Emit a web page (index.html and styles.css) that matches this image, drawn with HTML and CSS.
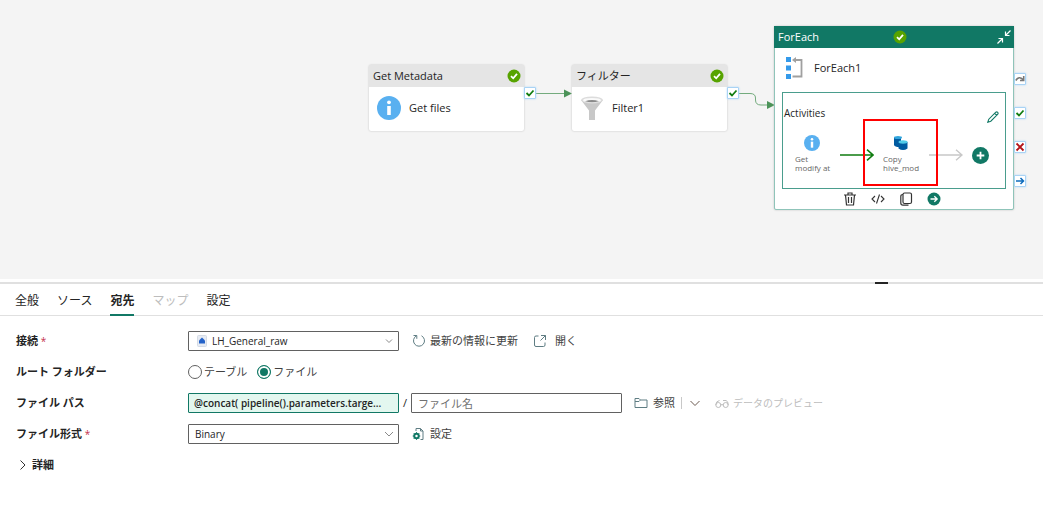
FILE: index.html
```html
<!DOCTYPE html>
<html lang="ja">
<head>
  <meta charset="UTF-8" />
  <meta name="viewport" content="width=device-width, initial-scale=1.0"/>
  <title>パイプライン</title>
  <link rel="stylesheet" href="styles.css">
</head>
<body>
  <main class="canvas">
    <svg class="links" width="1043" height="270" fill="none" stroke="#73ab7d">
      <path d="M535 93.500H565"/>
      <path d="M738 93.500H750Q755.500 93.500 755.500 98V100Q755.500 105 761 105H768"/>
      <path d="M564 89.500L572 93.500L564 97.500ZM767 101L775 105L767 109Z" fill="#4c9359" stroke="none"/>
    </svg>

    <section class="node node-metadata">
      <header class="node-head">
        <span>Get Metadata</span>
        <svg class="status" viewBox="0 0 14 14"><circle cx="7" cy="7" r="6.500" fill="#57a300"/><path d="M4 7.200L6.200 9.300L10 4.900" fill="none" stroke="#fff" stroke-width="1.800"/></svg>
      </header>
      <div class="node-body">
        <svg width="24" height="24" viewBox="0 0 24 24"><circle cx="12" cy="12" r="12" fill="#59b0f0"/><circle cx="12" cy="6.300" r="1.900" fill="#fff"/><path d="M10.200 10H13.800V19H10.200Z" fill="#fff"/></svg>
        <span>Get files</span>
      </div>
      <span class="port port-out"><svg viewBox="0 0 10 10"><path d="M1.500 5L4 7.500L8.500 2.500" stroke="#107c10" stroke-width="1.800" fill="none"/></svg></span>
    </section>

    <section class="node node-filter">
      <header class="node-head">
        <span>フィルター</span>
        <svg class="status" viewBox="0 0 14 14"><circle cx="7" cy="7" r="6.500" fill="#57a300"/><path d="M4 7.200L6.200 9.300L10 4.900" fill="none" stroke="#fff" stroke-width="1.800"/></svg>
      </header>
      <div class="node-body">
        <svg width="24" height="24" viewBox="0 0 24 24"><path d="M1 4L9 14.500V24H15V14.500L23 4Z" fill="#c8c8c8"/><ellipse cx="12" cy="4" rx="11" ry="3.500" fill="#dcdcdc"/><ellipse cx="12" cy="4.200" rx="9" ry="2.300" fill="#fafafa"/><path d="M5 5.200Q12 3 19 5.200Q12 7.500 5 5.200Z" fill="#8a8a8a"/></svg>
        <span>Filter1</span>
      </div>
      <span class="port port-out"><svg viewBox="0 0 10 10"><path d="M1.500 5L4 7.500L8.500 2.500" stroke="#107c10" stroke-width="1.800" fill="none"/></svg></span>
    </section>

    <section class="node node-foreach">
      <header class="foreach-head">
        <span>ForEach</span>
        <svg class="status" viewBox="0 0 14 14"><circle cx="7" cy="7" r="6.500" fill="#57a300"/><path d="M4 7.200L6.200 9.300L10 4.900" fill="none" stroke="#fff" stroke-width="1.800"/></svg>
        <button class="icon-btn collapse" aria-label="折りたたむ"><svg width="14" height="14" viewBox="0 0 14 14" fill="none" stroke="#fff" stroke-width="1.200"><path d="M13.500 .5L8.500 5.500M8.500 1.500V5.500H12.500M.5 13.500L5.500 8.500M1.500 8.500H5.500V12.500"/></svg></button>
      </header>
      <div class="foreach-title">
        <svg width="18" height="22" viewBox="0 0 18 22"><path d="M0 0H5V5H0ZM0 8.500H5V13.500H0ZM0 17H5V22H0Z" fill="#349aea"/><path d="M8 3H15.500V19.500H6.500" fill="none" stroke="#a0a0a0" stroke-width="1.800"/><path d="M6 3L10 0V6Z" fill="#a0a0a0"/></svg>
        <span>ForEach1</span>
      </div>
      <div class="activities">
        <span class="activities-label">Activities</span>
        <button class="icon-btn edit" aria-label="編集"><svg width="12" height="12" viewBox="0 0 12 12" fill="none" stroke="#117865" stroke-width="1.100"><path d="M.8 11.200L1.800 8.200L8.800 1.200Q9.800 .5 10.700 1.300Q11.500 2.200 10.800 3.200L3.800 10.200ZM7.700 2.300L9.700 4.300"/></svg></button>
        <div class="activity activity-get">
          <svg width="16" height="16" viewBox="0 0 24 24"><circle cx="12" cy="12" r="12" fill="#59b0f0"/><circle cx="12" cy="6.300" r="1.900" fill="#fff"/><path d="M10.200 10H13.800V19H10.200Z" fill="#fff"/></svg>
          <span>Get<br>modify at</span>
        </div>
        <svg class="arrow arrow-done" viewBox="0 0 34 12" fill="none" stroke="#107c10" stroke-width="1.600"><path d="M0 6H33M27 .7L33 6L27 11.300"/></svg>
        <div class="activity activity-copy">
          <svg width="16" height="16" viewBox="0 0 16 16"><path d="M1 2.500V10Q2 12 6 12H8V2.500Z" fill="#005ba1"/><ellipse cx="5" cy="2.500" rx="4" ry="1.500" fill="#32a5dd"/><path d="M5.500 7V13.500Q10 16.500 14.500 13.500V7Z" fill="#005ba1"/><ellipse cx="10" cy="7" rx="4.500" ry="1.700" fill="#50cbe8"/></svg>
          <span>Copy<br>hive_mod</span>
        </div>
        <svg class="arrow arrow-next" viewBox="0 0 34 12" fill="none" stroke="#c8c8c8" stroke-width="1.400"><path d="M0 6H33M27 .7L33 6L27 11.300"/></svg>
        <button class="icon-btn add" aria-label="追加"><svg width="17" height="17" viewBox="0 0 17 17"><circle cx="8.500" cy="8.500" r="8.500" fill="#117865"/><path d="M8.500 4.700V12.300M4.700 8.500H12.300" stroke="#fff" stroke-width="1.800"/></svg></button>
        <div class="highlight"></div>
      </div>
      <div class="foreach-tools">
        <button class="icon-btn" aria-label="削除"><svg width="14" height="14" viewBox="0 0 14 14" fill="none" stroke="#333" stroke-width="1.200"><path d="M1 3H13M5 3V1H9V3M2.500 3L3.500 13H10.500L11.500 3M5.500 5V11M8.500 5V11"/></svg></button>
        <button class="icon-btn" aria-label="コード"><svg width="14" height="14" viewBox="0 0 14 14" fill="none" stroke="#333" stroke-width="1.100"><path d="M4 4L1 7L4 10M10 4L13 7L10 10M8.500 2.500L5.500 11.500"/></svg></button>
        <button class="icon-btn" aria-label="コピー"><svg width="14" height="14" viewBox="0 0 14 14" fill="none" stroke="#333" stroke-width="1.200"><rect x="4" y="1" width="8.500" height="10.500" rx="1.500"/><path d="M4 2.500Q1.800 2.500 1.800 4.500V11Q1.800 13.200 4 13.200H9.500"/></svg></button>
        <button class="icon-btn" aria-label="次へ"><svg width="14" height="14" viewBox="0 0 14 14" fill="none"><circle cx="7" cy="7" r="6.500" fill="#117865"/><path d="M3.500 7H10M7.300 4.200L10.200 7L7.300 9.800" stroke="#fff" stroke-width="1.300"/></svg></button>
      </div>
      <div class="ports">
        <span class="port"><svg viewBox="0 0 10 10"><path d="M.8 6.500Q4 1.500 8 5.500M8.700 2V6.500H5" stroke="#777" stroke-width="1.600" fill="none"/></svg></span>
        <span class="port"><svg viewBox="0 0 10 10"><path d="M1.500 5L4 7.500L8.500 2.500" stroke="#107c10" stroke-width="1.800" fill="none"/></svg></span>
        <span class="port"><svg viewBox="0 0 10 10"><path d="M1.500 1.500L8.500 8.500M8.500 1.500L1.500 8.500" stroke="#b3141b" stroke-width="1.800" fill="none"/></svg></span>
        <span class="port"><svg viewBox="0 0 10 10"><path d="M1 5H8.500M5.500 2L8.500 5L5.500 8" stroke="#0f6cbd" stroke-width="1.500" fill="none"/></svg></span>
      </div>
    </section>
  </main>

  <div class="splitter"><span></span></div>

  <nav class="tabs">
    <button>全般</button>
    <button>ソース</button>
    <button class="active">宛先</button>
    <button disabled>マップ</button>
    <button>設定</button>
  </nav>

  <form class="settings">
    <div class="row">
      <label class="name" for="connection">接続 <i>*</i></label>
      <div class="select-box with-icon">
        <svg class="select-icon" width="10" height="12" viewBox="0 0 10 12"><rect x=".5" y=".5" width="9" height="11" rx="1" fill="#e6ebf3" stroke="#d5dbe5"/><path d="M5 2.500L8 5.500V8.500H2V5.500Z" fill="#2563c9"/></svg>
        <select id="connection"><option>LH_General_raw</option></select>
        <svg class="chevron" viewBox="0 0 10 10"><path d="M2 3.500L5 6.500L8 3.500"/></svg>
      </div>
      <button type="button" class="link refresh"><svg width="14" height="14" viewBox="0 0 14 14"><path d="M9.500 1.800A5.500 5.500 0 1 1 4.500 1.800M1.500 1.500H4.800V4.800"/></svg>最新の情報に更新</button>
      <button type="button" class="link open"><svg width="14" height="14" viewBox="0 0 14 14"><path d="M5.500 2H3Q1.500 2 1.500 3.500V11Q1.500 12.500 3 12.500H10.500Q12 12.500 12 11V8.500M8 1.500H12.500V6M12.500 1.500L7.500 6.500"/></svg>開く</button>
    </div>
    <div class="row">
      <span class="name">ルート フォルダー</span>
      <label class="radio"><input type="radio" name="root">テーブル</label>
      <label class="radio"><input type="radio" name="root" checked>ファイル</label>
    </div>
    <div class="row">
      <label class="name" for="path">ファイル パス</label>
      <input type="text" id="path" class="field expression" value="@concat( pipeline().parameters.targe...">
      <span class="slash">/</span>
      <input type="text" class="field" placeholder="ファイル名" aria-label="ファイル名">
      <button type="button" class="link browse"><svg width="14" height="14" viewBox="0 0 14 14"><path d="M1 11.500V2.500H5L6.500 4H13V11.500ZM1 5.500H5L6.500 4"/></svg>参照</button>
      <button type="button" class="link more" aria-label="その他"><svg width="12" height="12" viewBox="0 0 12 12"><path d="M1.500 4L6 8.500L10.500 4"/></svg></button>
      <button type="button" class="link preview" disabled><svg width="14" height="14" viewBox="0 0 14 14"><circle cx="3.300" cy="9" r="2.500"/><circle cx="10.700" cy="9" r="2.500"/><path d="M5.800 9Q7 8 8.200 9M.8 9Q1 5 4.500 4.500M8 4.500H11Q13.200 5 13.200 9"/></svg>データのプレビュー</button>
    </div>
    <div class="row">
      <label class="name" for="format">ファイル形式 <i>*</i></label>
      <div class="select-box">
        <select id="format"><option>Binary</option></select>
        <svg class="chevron" viewBox="0 0 10 10"><path d="M1 3L5 7L9 3"/></svg>
      </div>
      <button type="button" class="link format-settings"><svg width="14" height="14" viewBox="0 0 14 14"><path d="M4 4V1.500H8.500L11 4V12.500H8.500M8.500 1.500V4H11"/><circle cx="4.500" cy="9" r="2.200" stroke="#117865" stroke-width="2"/><path d="M4.500 5.200V12.800M.7 9H8.300M1.800 6.300L7.200 11.700M7.200 6.300L1.800 11.700" stroke="#117865"/><circle cx="4.500" cy="9" r="1.200" fill="#fff" stroke="none"/></svg>設定</button>
    </div>
    <button type="button" class="details"><svg width="10" height="12" viewBox="0 0 10 12" fill="none" stroke="#333"><path d="M2.500 1.500L7 6L2.500 10.500"/></svg>詳細</button>
  </form>
</body>
</html>
```
FILE: styles.css
```css
* {
  box-sizing: border-box;
}
body {
  margin: 0;
  font-family: "Open Sans", "Noto Sans CJK JP", sans-serif;
  font-size: 11px;
  line-height: 16px;
  color: #242424;
  background: white;
}
button, input, select {
  font: inherit;
  color: inherit;
}
button {
  padding: 0;
  border: none;
  background: none;
  cursor: pointer;
}
svg {
  display: block;
  flex: none;
}

/* canvas */
.canvas {
  position: relative;
  height: 279px;
  background: #f4f4f4;
  overflow: hidden;
}
.links {
  position: absolute;
  left: 0;
  top: 0;
}
.node {
  position: absolute;
  width: 155px;
  background: white;
  border-radius: 2px;
  box-shadow: 0 0 2px #bbb;
}
.node-metadata {
  left: 369px;
  top: 65px;
}
.node-filter {
  left: 572px;
  top: 65px;
}
.node-head {
  display: flex;
  justify-content: space-between;
  align-items: center;
  height: 22px;
  padding: 0 3px 0 4px;
  background: #e5e5e5;
}
.status {
  width: 14px;
  height: 14px;
}
.node-body {
  display: flex;
  align-items: center;
  gap: 8px;
  height: 44px;
  padding: 0 8px 2px;
}
.port {
  display: block;
  width: 12px;
  height: 12px;
  background: white;
  border: 1px solid #a9d3f5;
  border-radius: 1px;
  box-shadow: 0 0 2px #a9d3f5;
}
.port-out {
  position: absolute;
  right: -12px;
  top: 22px;
}
.icon-btn {
  display: block;
}

.node-foreach {
  left: 774px;
  top: 26px;
  width: 240px;
  border: 1px solid #8fc4b9;
}
.foreach-head {
  display: grid;
  grid-template-columns: 115px 14px 1fr;
  align-items: center;
  height: 22px;
  margin: -1px -1px 0;
  padding: 0 3px 0 4px;
  color: white;
  background: #117865;
}
.collapse {
  justify-self: end;
}
.foreach-title {
  display: flex;
  align-items: center;
  gap: 10px;
  height: 44px;
  padding: 0 11px 4px;
}
.activities {
  position: relative;
  height: 97px;
  margin: 0 7px;
  border: 1px solid #4a9d8d;
}
.activities-label {
  position: absolute;
  left: 1px;
  top: 12px;
  font-size: 10px;
}
.edit {
  position: absolute;
  right: 6px;
  top: 18px;
}
.activity {
  position: absolute;
  top: 42px;
  font-size: 8px;
  line-height: 9px;
  color: #666;
}
.activity svg {
  margin: 0 0 3px 9px;
}
.activity-get {
  left: 12px;
}
.activity-copy {
  left: 100px;
}
.activity-copy svg {
  margin-left: 10px;
}
.arrow {
  position: absolute;
  top: 56px;
  width: 34px;
  height: 12px;
}
.arrow-done {
  left: 57px;
}
.arrow-next {
  left: 146px;
}
.add {
  position: absolute;
  right: 16px;
  top: 54px;
}
.highlight {
  position: absolute;
  left: 80px;
  top: 26px;
  width: 75px;
  height: 67px;
  border: 2px solid #f00;
}
.foreach-tools {
  display: flex;
  justify-content: center;
  align-items: center;
  gap: 14px;
  height: 20px;
  padding-right: 4px;
}
.ports {
  position: absolute;
  left: 239px;
  top: 46px;
  display: grid;
  gap: 22px;
}

/* splitter */
.splitter {
  display: flex;
  justify-content: flex-end;
  height: 5px;
  padding-right: 155px;
  border-top: 3px solid white;
  background: #e0e0e0;
}
.splitter span {
  width: 13px;
  background: #242424;
}

/* tabs */
.tabs {
  display: flex;
  gap: 18px;
  height: 32px;
  padding: 0 15px;
  border-bottom: 1px solid #e0e0e0;
}
.tabs button {
  height: 32px;
  padding-top: 4px;
  border-bottom: 2px solid transparent;
  font-size: 12px;
  white-space: nowrap;
}
.tabs .active {
  border-color: #117865;
  font-weight: bold;
}
.tabs button:disabled {
  color: #bdbdbd;
}

/* settings */
.settings {
  display: flex;
  flex-direction: column;
  gap: 11px;
  padding: 15px 16px;
}
.row {
  display: flex;
  align-items: center;
  height: 20px;
  white-space: nowrap;
}
.name {
  width: 172px;
  font-weight: 600;
}
.name i {
  color: #c4314b;
  font-size: 10px;
  font-style: normal;
  font-weight: normal;
}
.field, .select-box {
  width: 211px;
  height: 20px;
}
.field, select {
  padding: 0 6px;
  border: 1px solid #616161;
  border-radius: 1px;
  background: white;
}
.field::placeholder {
  color: #707070;
}
.expression {
  padding: 0 5px;
  border-color: #117865;
  background: #e3f7ef;
  font-size: 10px;
  font-weight: 600;
}
.select-box {
  position: relative;
}
select {
  width: 100%;
  height: 20px;
  appearance: none;
  font-size: 10px;
}
.with-icon select {
  padding-left: 23px;
}
.select-icon {
  position: absolute;
  left: 9px;
  top: 4px;
}
.chevron {
  position: absolute;
  right: 5px;
  top: 5px;
  width: 10px;
  height: 10px;
  fill: none;
  stroke: #8a8a8a;
}
.slash {
  width: 12px;
  text-align: center;
}
.radio {
  display: flex;
  align-items: center;
  gap: 2px;
  margin-right: 10px;
  color: #424242;
}
.radio input {
  appearance: none;
  width: 14px;
  height: 14px;
  margin: 0;
  border: 1px solid #616161;
  border-radius: 50%;
}
.radio input:checked {
  border-color: #117865;
  background: #117865;
  box-shadow: inset 0 0 0 2px white;
}
.link {
  display: flex;
  align-items: center;
  gap: 4px;
  color: #424242;
}
.link svg {
  fill: none;
  stroke: #5f7d83;
}
.refresh {
  margin-left: 13px;
}
.open {
  gap: 8px;
  margin-left: 15px;
}
.browse {
  gap: 5px;
  margin-left: 12px;
}
.more {
  margin-left: 6px;
  padding-left: 7px;
  border-left: 1px solid #c8c8c8;
}
.more svg {
  stroke: #6b5a50;
}
.preview {
  margin-left: 14px;
  font-size: 10px;
}
.preview:disabled {
  color: #bdbdbd;
}
.preview svg {
  stroke: #bdbdbd;
}
.format-settings {
  margin-left: 13px;
}
.details {
  display: flex;
  align-items: center;
  align-self: flex-start;
  gap: 4px;
  height: 20px;
  padding-left: 2px;
  font-weight: 600;
}
```
